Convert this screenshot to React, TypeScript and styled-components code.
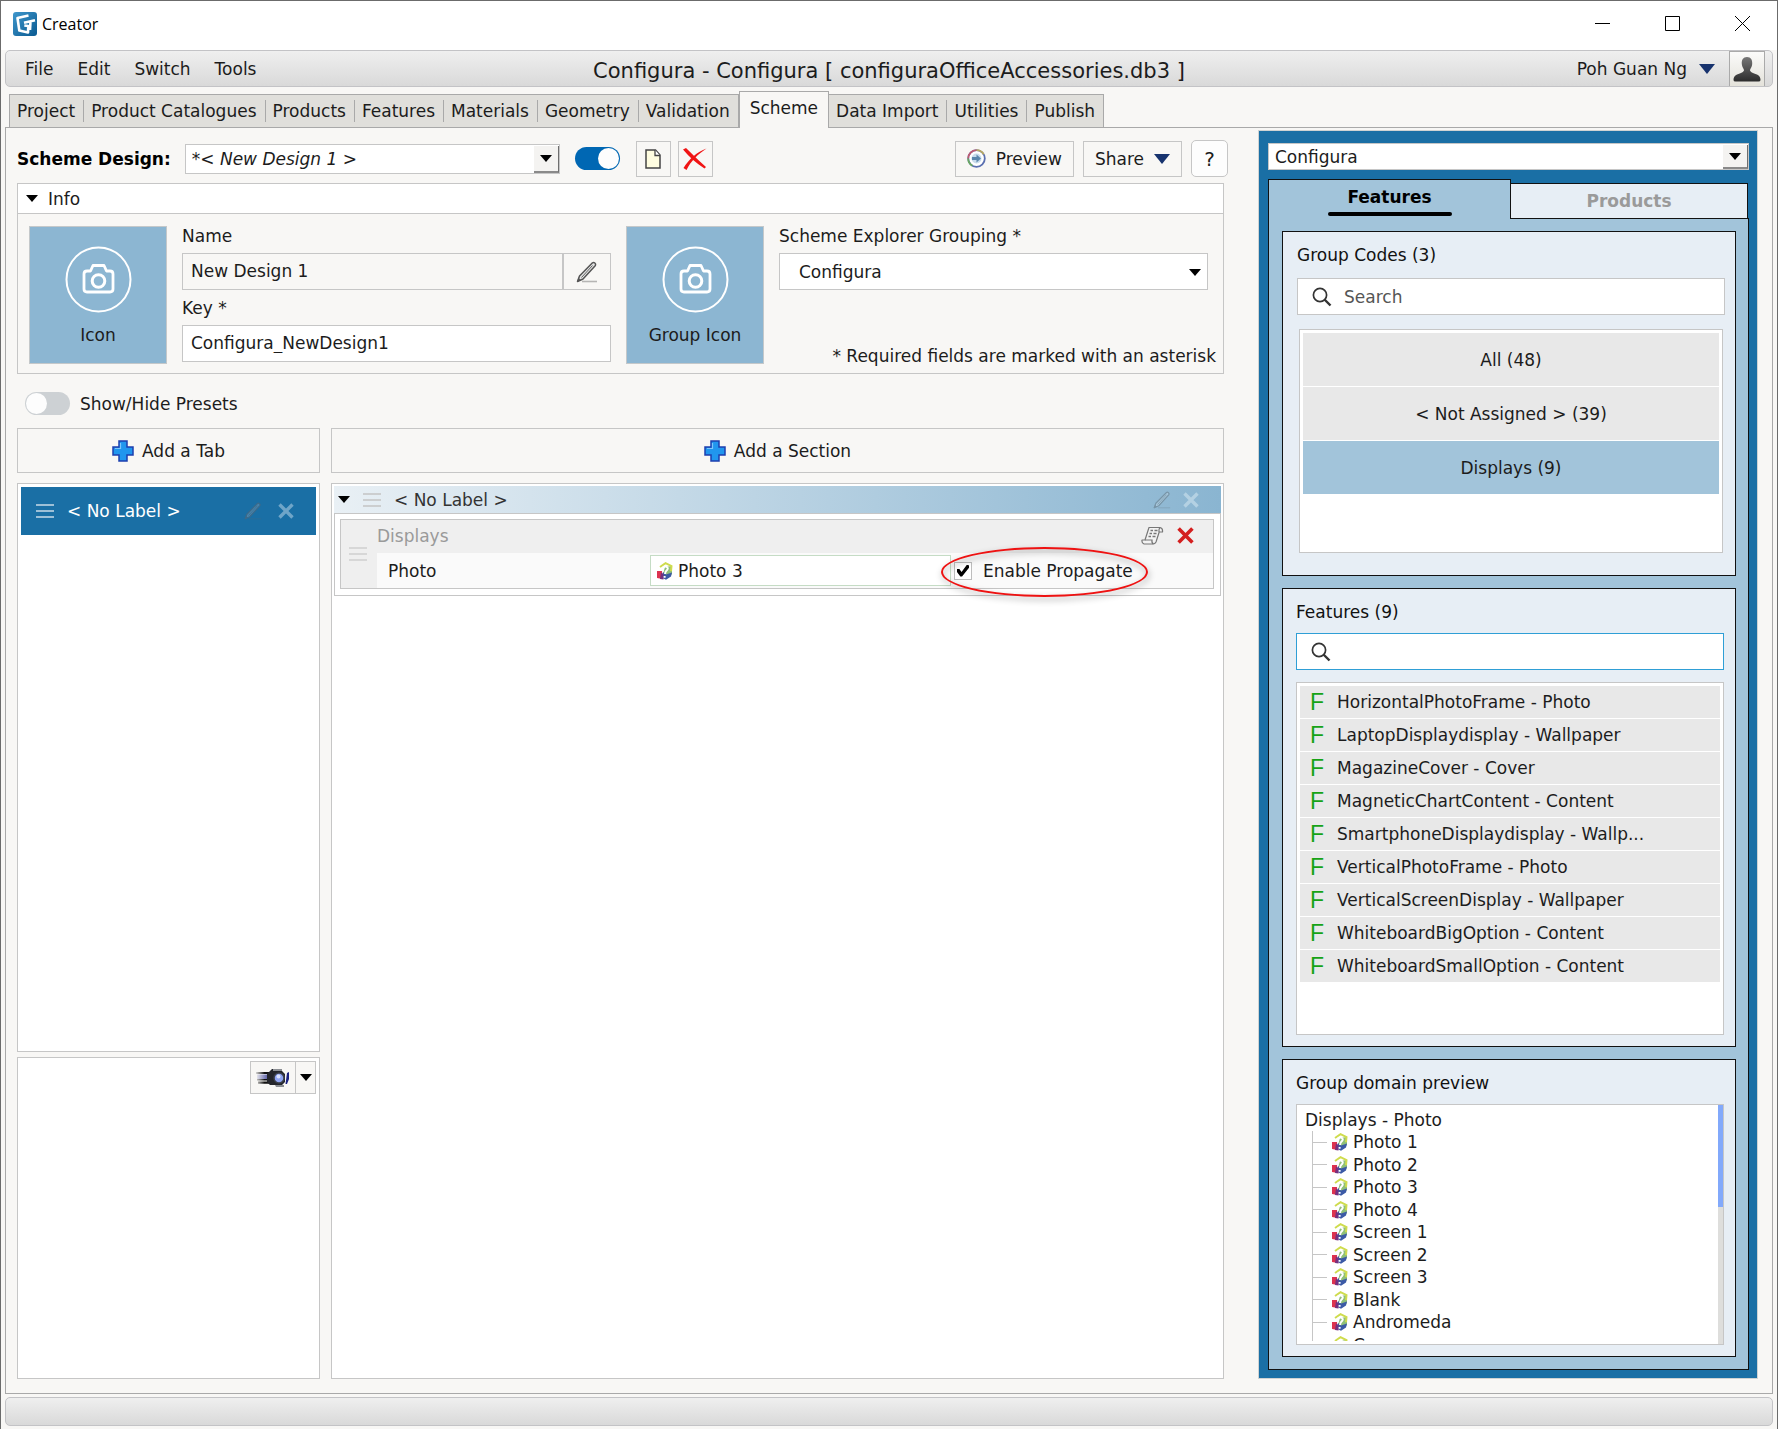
import React, { useState } from "react";
import styled, { createGlobalStyle, css } from "styled-components";

const line = "#c6c6c6";
const blue = "#1a6fa5";
const skyBlue = "#a2c4da";
const sans = `"DejaVu Sans", Verdana, sans-serif`;

const GlobalStyle = createGlobalStyle`
  *, *::before, *::after { box-sizing: border-box; }
  body { margin: 0; background: #f8f7f5; }
  button, input, select { font: inherit; color: inherit; margin: 0; }
  button { cursor: pointer; }
  ul { list-style: none; margin: 0; padding: 0; }
  svg { display: block; flex: none; }
`;

const Window = styled.div`
  display: flex;
  flex-direction: column;
  min-height: 100vh;
  border: 1px solid #6b6b6b;
  border-bottom: 0;
  background: #f8f7f5;
  color: #1c1c1c;
  font: 17px/20px ${sans};
`;

/* ---------- title bar ---------- */

const TitleBar = styled.header`
  display: flex;
  align-items: center;
  height: 49px;
  padding: 0 0 4px 12px;
  gap: 5px;
  background: #fff;
  color: #000;
  font: 16px/22px "Open Sans", "Noto Sans", sans-serif;
`;

const WindowButtons = styled.div`
  display: flex;
  margin-left: auto;
`;

const WindowButton = styled.button`
  display: grid;
  place-items: center;
  width: 70px;
  height: 44px;
  padding: 0;
  border: 0;
  background: none;
`;

/* ---------- menu bar ---------- */

const bar = css`
  border: 1px solid #c3c3c6;
  border-radius: 5px;
  background: linear-gradient(#efefef, #d9d9d9);
`;

const MenuBar = styled.nav`
  ${bar}
  display: grid;
  grid-template-columns: 1fr auto 1fr;
  align-items: center;
  height: 37px;
  margin: 0 4px;
`;

const Menus = styled.div`
  display: flex;
  padding-left: 7px;
`;

const MenuButton = styled.button`
  height: 35px;
  padding: 1px 12px 0;
  border: 0;
  background: none;
`;

const DocumentTitle = styled.h1`
  margin: 0;
  padding-top: 4px;
  font-size: 21px;
  line-height: 26px;
  font-weight: normal;
`;

const UserArea = styled.div`
  display: flex;
  justify-content: flex-end;
  align-items: center;
  gap: 14px;
  padding-right: 7px;
`;

const UserButton = styled.button`
  display: flex;
  align-items: center;
  gap: 12px;
  padding: 0;
  border: 0;
  background: none;
`;

const Avatar = styled.button`
  display: grid;
  place-items: end center;
  width: 36px;
  height: 35px;
  padding: 0 0 4px;
  border: 1px solid #aaa;
  border-bottom: 0;
  background: linear-gradient(#fbfbfa, #e4e2da);
`;

/* ---------- page tabs ---------- */

const PageTabs = styled.div`
  display: flex;
  align-items: flex-end;
  height: 36px;
  margin: 4px 8px 0;
`;

const TabGroup = styled.div`
  display: flex;
  align-items: center;
  height: 33px;
  border: 1px solid #a9a9a9;
  border-bottom: 0;
  background: #e0dfdb;
`;

const PageTab = styled.button`
  height: 32px;
  padding: 0 8px 0 7px;
  border: 0;
  background: none;
`;

const TabDivider = styled.span`
  width: 1px;
  height: 22px;
  background: #a9a9a9;
`;

const ActivePageTab = styled.button`
  z-index: 1;
  height: 37px;
  margin: 0 -1px -1px 0;
  padding: 0 10px 5px;
  border: 1px solid #a9a9a9;
  border-bottom: 0;
  background: #f8f7f5;
`;

/* ---------- page frame ---------- */

const Page = styled.main`
  flex: 1;
  display: flex;
  align-items: stretch;
  gap: 30px;
  margin: 0 4px;
  padding: 2px 14px 14px 11px;
  border: 1px solid #a9a9a9;
`;

const Editor = styled.section`
  flex: 1;
  min-width: 0;
  display: flex;
  flex-direction: column;
  padding-top: 10px;
`;

const EditorBody = styled.div`
  flex: 1;
  display: flex;
  flex-direction: column;
  margin: 6px 4px 0 0;
`;

const Toolbar = styled.div`
  display: flex;
  align-items: center;
  height: 37px;
`;

const DesignLabel = styled.label`
  margin-right: 14px;
  color: #000;
  font-weight: bold;
`;

const SelectBox = styled.div<{ $width?: number; $height: number }>`
  position: relative;
  width: ${(p) => (p.$width ? `${p.$width}px` : "100%")};
  height: ${(p) => p.$height}px;
`;

const Select = styled.select<{ $inset?: number; $italic?: boolean }>`
  appearance: none;
  display: block;
  width: 100%;
  height: 100%;
  padding: 0 32px 0 ${(p) => p.$inset ?? 6}px;
  border: 1px solid ${line};
  border-radius: 0;
  background: #fff;
  font-style: ${(p) => (p.$italic ? "italic" : "normal")};
`;

const SelectArrow = styled.span<{ $raised?: boolean }>`
  position: absolute;
  top: 2px;
  right: 1px;
  bottom: 1px;
  display: grid;
  place-items: center;
  width: 25px;
  pointer-events: none;
  ${(p) =>
    p.$raised &&
    css`
      background: #f4f3f1;
      border-right: 1px solid #6e6e6e;
      border-bottom: 2px solid #8a8a8a;
    `}
`;

const Switch = styled.input`
  appearance: none;
  flex: none;
  width: 45px;
  height: 23px;
  border-radius: 12px;
  background: #cdd1d4;
  cursor: pointer;

  &::before {
    content: "";
    display: block;
    width: 21px;
    height: 21px;
    margin: 1px;
    border-radius: 50%;
    background: #fdfdfd;
  }
  &:checked {
    background: #0067b3;
  }
  &:checked::before {
    margin-left: 23px;
  }
`;

const ToolButton = styled.button<{ $width?: number; $rounded?: boolean }>`
  display: flex;
  align-items: center;
  justify-content: center;
  gap: 10px;
  width: ${(p) => (p.$width ? `${p.$width}px` : "auto")};
  height: ${(p) => (p.$rounded ? 37 : 36)}px;
  padding: 0 ${(p) => (p.$width ? 0 : 11)}px;
  border: 1px solid ${line};
  border-radius: ${(p) => (p.$rounded ? 5 : 0)}px;
  background: ${(p) => (p.$rounded ? "#fdfdfd" : "#f8f7f5")};
  font-size: ${(p) => (p.$rounded ? 20 : 17)}px;
`;

const ToolGroup = styled.div<{ $gap: number; $push?: boolean }>`
  display: flex;
  align-items: center;
  gap: ${(p) => p.$gap}px;
  margin-left: ${(p) => (p.$push ? "auto" : "15px")};
`;

/* ---------- info ---------- */

const InfoPanel = styled.section`
  border: 1px solid ${line};
`;

const InfoHeader = styled.button`
  display: flex;
  align-items: center;
  gap: 10px;
  width: 100%;
  height: 30px;
  padding: 0 8px;
  border: 0;
  border-bottom: 1px solid ${line};
  background: #fff;
`;

const InfoGrid = styled.div`
  display: grid;
  grid-template-columns: 138px 1fr 138px 1fr;
  gap: 15px;
  padding: 12px 15px 9px 11px;
`;

const IconTile = styled.button`
  display: flex;
  flex-direction: column;
  align-items: center;
  justify-content: space-between;
  height: 138px;
  padding: 19px 0 18px;
  border: 1px solid #c4c8ca;
  background: #8cb6d2;
`;

const Fields = styled.div`
  display: flex;
  flex-direction: column;
  gap: 8px;
`;

const Field = styled.div`
  display: flex;
  flex-direction: column;
  gap: 7px;
`;

const FieldRow = styled.div`
  display: flex;
`;

const TextInput = styled.input`
  flex: 1;
  min-width: 0;
  height: 37px;
  padding: 0 8px 2px;
  border: 1px solid ${line};
  background: #fff;
  &:read-only {
    background: #f8f7f5;
  }
`;

const EditButton = styled.button`
  display: grid;
  place-items: center;
  width: 48px;
  height: 37px;
  padding: 0;
  border: 1px solid ${line};
  background: #f8f7f5;
`;

const RequiredNote = styled.p`
  margin: auto -8px 0 0;
  line-height: 16px;
  text-align: right;
  white-space: nowrap;
`;

/* ---------- workspace ---------- */

const PresetsRow = styled.label`
  display: flex;
  align-items: center;
  gap: 10px;
  margin: 18px 0 13px 8px;
`;

const Workspace = styled.div`
  flex: 1;
  display: grid;
  grid-template-columns: 303px 1fr;
  grid-template-rows: auto 1fr;
  gap: 10px 11px;
`;

const AddButton = styled.button`
  display: flex;
  align-items: center;
  justify-content: center;
  gap: 8px;
  height: 45px;
  padding: 1px 0 0;
  border: 1px solid ${line};
  background: #f8f7f5;
`;

const Column = styled.div`
  display: flex;
  flex-direction: column;
  gap: 5px;
`;

const Panel = styled.div<{ $height?: number }>`
  flex: ${(p) => (p.$height ? "none" : 1)};
  height: ${(p) => (p.$height ? `${p.$height}px` : "auto")};
  padding: 3px;
  border: 1px solid ${line};
  background: #fff;
`;

const TabItem = styled.div`
  display: flex;
  align-items: center;
  height: 48px;
  padding: 0 22px 0 15px;
  gap: 13px;
  background: ${blue};
  color: #fff;
`;

const RowActions = styled.span<{ $gap: number }>`
  display: flex;
  align-items: center;
  gap: ${(p) => p.$gap}px;
  margin-left: auto;
`;

const IconButton = styled.button`
  display: grid;
  place-items: center;
  padding: 0;
  border: 0;
  background: none;
`;

const CameraBar = styled.div`
  display: flex;
  justify-content: flex-end;
`;

const CameraButton = styled.button<{ $width: number }>`
  display: grid;
  place-items: center;
  width: ${(p) => p.$width}px;
  height: 33px;
  margin-left: -1px;
  padding: 0;
  border: 1px solid ${line};
  background: #f8f7f5;
`;

const SectionPanel = styled(Panel)`
  padding: 2px;
`;

const SectionHeader = styled.div`
  display: flex;
  align-items: center;
  height: 27px;
  padding: 0 22px 0 4px;
  gap: 13px;
  background: linear-gradient(90deg, #e9f0f5, #8ab5d1);
  color: #333;
`;

const SectionBody = styled.div`
  height: 83px;
  padding: 5px 6px 7px 5px;
  border: 1px solid ${line};
`;

const FeatureBox = styled.div`
  display: grid;
  grid-template-columns: 36px 1fr;
  align-items: center;
  height: 70px;
  border: 1px solid ${line};
  background: #efefef;
`;

const Handle = styled.span`
  padding-left: 8px;
`;

const FeatureHead = styled.div`
  display: flex;
  align-items: center;
  height: 33px;
  padding: 0 19px 2px 0;
  color: #9a9a9a;
`;

const FeatureLine = styled.div`
  display: flex;
  align-items: center;
  height: 35px;
  background: #fafafa;
`;

const FeatureName = styled.span`
  flex: 0 0 273px;
  padding-left: 11px;
`;

const DomainField = styled.button`
  display: flex;
  align-items: center;
  gap: 5px;
  flex: 0 1 301px;
  height: 31px;
  padding: 0 6px;
  border: 1px solid #c5dcc5;
  background: #fff;
`;

const PropagateLabel = styled.label`
  position: relative;
  display: flex;
  align-items: center;
  gap: 11px;
  margin-left: 3px;
`;

const CheckBox = styled.input`
  appearance: none;
  width: 18px;
  height: 18px;
  border: 1px solid #bdbdbd;
  background: #fff;

  &:checked::before {
    content: "";
    display: block;
    width: 12px;
    height: 12px;
    margin: 2px;
    background: #000;
    clip-path: polygon(0 38%, 20% 38%, 38% 62%, 84% 0, 100% 8%, 100% 28%, 42% 100%, 28% 100%, 0 62%);
  }
`;

const Callout = styled.span`
  position: absolute;
  inset: -14px -15px -16px -13px;
  border: 2px solid #ee1212;
  border-radius: 50%;
  filter: drop-shadow(1px 3px 3px rgba(0, 0, 0, 0.4));
  pointer-events: none;
`;

/* ---------- side panel ---------- */

const Side = styled.aside`
  flex: none;
  display: flex;
  flex-direction: column;
  width: 500px;
  padding: 12px 8px 8px 9px;
  border: 1px solid #cfd3d3;
  background: ${blue};
`;

const SideTabs = styled.div`
  display: grid;
  grid-template-columns: 243px 1fr;
  align-items: end;
  margin-top: 9px;
`;

const SideTab = styled.button<{ $active?: boolean }>`
  display: flex;
  flex-direction: column;
  align-items: center;
  border: 1px solid #111;
  padding: 0;
  font-weight: bold;
  ${(p) =>
    p.$active
      ? css`
          z-index: 1;
          height: 40px;
          margin-bottom: -1px;
          padding-top: 7px;
          border-bottom: 0;
          gap: 5px;
          background: ${skyBlue};
          color: #000;
        `
      : css`
          height: 36px;
          margin: 0 1px -1px -1px;
          justify-content: center;
          background: #e7eef5;
          color: #9a9a9a;
        `}
`;

const ActiveMark = styled.span`
  width: 124px;
  height: 4px;
  border-radius: 2px;
  background: #000;
`;

const SideBody = styled.div`
  flex: 1;
  display: flex;
  flex-direction: column;
  gap: 12px;
  padding: 12px 12px 12px 13px;
  border: 1px solid #111;
  background: ${skyBlue};
`;

const Card = styled.section<{ $roomy?: boolean; $grow?: boolean }>`
  display: flex;
  flex-direction: column;
  flex: ${(p) => (p.$grow ? 1 : "none")};
  gap: ${(p) => (p.$roomy ? 14 : 12)}px;
  padding: ${(p) => (p.$roomy ? "12px 10px 22px 14px" : "12px 11px 11px 13px")};
  border: 1px solid #111;
  background: #e7eef5;
`;

const CardTitle = styled.h2`
  margin: 0 0 -2px;
  font-size: 17px;
  line-height: 22px;
  font-weight: normal;
  color: #111;
`;

const SearchBox = styled.label<{ $active?: boolean }>`
  display: flex;
  align-items: center;
  gap: 12px;
  height: 37px;
  padding: 0 14px;
  border: 1px solid ${(p) => (p.$active ? "#2f9fd6" : line)};
  background: #fff;
`;

const SearchInput = styled.input`
  flex: 1;
  min-width: 0;
  padding: 0;
  border: 0;
  outline: 0;
  background: none;
  &::placeholder {
    color: #555;
    opacity: 1;
  }
`;

const List = styled.ul<{ $inset?: boolean; $minHeight?: number }>`
  flex: 1;
  display: flex;
  flex-direction: column;
  gap: 1px;
  margin: 0 ${(p) => (p.$inset ? 2 : 0)}px;
  padding: 3px;
  min-height: ${(p) => p.$minHeight ?? 0}px;
  border: 1px solid ${line};
  background: #fff;
`;

const GroupItem = styled.button<{ $active?: boolean }>`
  display: block;
  width: 100%;
  height: 53px;
  padding: 0;
  border: 0;
  background: ${(p) => (p.$active ? skyBlue : "#e8e8e8")};
`;

const FeatureItem = styled.button`
  display: grid;
  grid-template-columns: 27px 1fr;
  align-items: center;
  width: 100%;
  height: 32px;
  padding: 0 10px;
  border: 0;
  background: #e8e8e8;
  text-align: left;
`;

const FeatureMark = styled.span`
  color: #16a316;
  font-family: "Liberation Sans", Arial, sans-serif;
  font-size: 23px;
`;

const DomainBox = styled.div`
  display: flex;
  justify-content: space-between;
  height: 241px;
  border: 1px solid ${line};
  background: #fff;
`;

const DomainTree = styled.div`
  display: flex;
  flex-direction: column;
  padding: 4px 8px 3px;
  line-height: 22px;
`;

const TreeClip = styled.div`
  flex: 1;
  min-height: 0;
  margin-left: 7px;
  border-left: 1px solid ${line};
  overflow: hidden;
`;

const TreeRows = styled.ul`
  display: grid;
  grid-template-rows: repeat(10, 1fr);
  height: 225px;
`;

const TreeRow = styled.li`
  display: flex;
  align-items: center;
  gap: 5px;

  &::before {
    content: "";
    width: 14px;
    height: 1px;
    background: ${line};
  }
`;

const ScrollTrack = styled.div`
  width: 5px;
  background: #dededc;
`;

const ScrollThumb = styled.div`
  height: 102px;
  background: #82a9fb;
`;

const StatusBar = styled.footer`
  ${bar}
  height: 29px;
  margin: 3px 4px;
`;

/* ---------- icons ---------- */

const Logo = () => (
  <svg width="24" height="24" viewBox="0 0 24 24" aria-hidden="true">
    <defs>
      <linearGradient id="logo" x1="0" y1="0" x2="1" y2="1">
        <stop offset="0" stopColor="#3f97cc" />
        <stop offset="1" stopColor="#0a5a91" />
      </linearGradient>
    </defs>
    <rect width="24" height="24" rx="3" fill="url(#logo)" />
    <path d="M15.500 3.500 4.500 6l1.800 12.500 8.700 2 .3-6.500-4-.5" fill="none" stroke="#fff" strokeWidth="2.600" strokeLinejoin="round" />
    <path d="m11 10.800 11-2.600M17.500 9.500l-.5 8.500" fill="none" stroke="#fff" strokeWidth="2.600" />
  </svg>
);

const Triangle = ({ size = 12, color = "#000" }: { size?: number; color?: string }) => (
  <svg width={size} height={Math.round(size * 0.6)} viewBox="0 0 10 6" preserveAspectRatio="none" aria-hidden="true">
    <path d="M0 0h10L5 6z" fill={color} />
  </svg>
);

const Lines = ({ color = "#c4c4c4" }: { color?: string }) => (
  <svg width="18" height="14" viewBox="0 0 18 14" aria-hidden="true">
    <path d="M0 1h18M0 7h18M0 13h18" stroke={color} strokeWidth="1.500" />
  </svg>
);

const Pencil = ({ size = 22, color = "#555", fill = "#e4e4e4" }: { size?: number; color?: string; fill?: string }) => (
  <svg width={size} height={size} viewBox="0 0 22 22" aria-hidden="true">
    <path d="M6 20.500h15" stroke={color} strokeWidth="1.600" opacity=".4" />
    <path d="M1.500 20.500 3.500 15 16.500 1.800c1.500-1 3.800.8 2.900 2.600L7 18z" fill={fill} stroke={color} strokeWidth="1.500" strokeLinejoin="round" />
    <path d="m5.500 16.500 11-12M1.500 20.500l1.200-3 1.600 1.500z" fill={color} stroke={color} strokeWidth=".9" />
  </svg>
);

const Cross = ({ size = 16, color, width = 3.4 }: { size?: number; color: string; width?: number }) => (
  <svg width={size} height={size} viewBox="0 0 16 16" aria-hidden="true">
    <path d="m1.500 1.500 13 13M14.500 1.500l-13 13" stroke={color} strokeWidth={width} />
  </svg>
);

const DeleteMark = () => (
  <svg width="26" height="24" viewBox="0 0 26 24" aria-hidden="true">
    <path d="M1 2.500 4 1c5 5 12 12 20 19l-1.500 1.500C14 16 7 10 1 2.500z" fill="#f01414" />
    <path d="M24.500 1.500C16 7 9 14 4.500 23L1.500 21C7 12 15 5 24.500 1.500z" fill="#f01414" />
  </svg>
);

const NewPage = () => (
  <svg width="16" height="20" viewBox="0 0 16 20" aria-hidden="true">
    <path d="M1 1h9.500L15 6v13H1z" fill="#fffde0" stroke="#444" strokeWidth="1.500" />
    <path d="M10 1v5.500h5" fill="#fff" stroke="#444" strokeWidth="1.300" />
  </svg>
);

const PreviewMark = () => (
  <svg width="19" height="19" viewBox="0 0 19 19" aria-hidden="true">
    <circle cx="9.500" cy="9.500" r="8.300" fill="#fff" stroke="#5a6fb0" strokeWidth="1.800" />
    <path d="M1.200 9.500A8.300 8.300 0 0 1 9.500 1.200" fill="none" stroke="#c05a70" strokeWidth="1.800" />
    <path d="M9.500 1.200a8.300 8.300 0 0 1 7.200 4.200" fill="none" stroke="#b8a860" strokeWidth="1.800" />
    <path d="M1.200 9.500a8.300 8.300 0 0 0 4.200 7.200" fill="none" stroke="#6aa860" strokeWidth="1.800" />
    <circle cx="9.500" cy="9.500" r="5" fill="#c9dcec" />
    <path d="M5 8h4.500V5.500L14 9.500l-4.500 4V11H5z" fill="#5a86ac" />
  </svg>
);

const CameraMark = () => (
  <svg width="67" height="67" viewBox="0 0 67 67" fill="none" stroke="#fff" aria-hidden="true">
    <circle cx="33.500" cy="33.500" r="32" strokeWidth="2" />
    <path d="M22 25h3.500l2.500-5.500h11l2.500 5.500H45q3 0 3 3v15q0 3-3 3H22q-3 0-3-3V28q0-3 3-3z" strokeWidth="2.800" strokeLinejoin="round" />
    <circle cx="33.500" cy="35" r="6.300" strokeWidth="3" />
  </svg>
);

const Plus = () => (
  <svg width="22" height="22" viewBox="0 0 22 22" aria-hidden="true">
    <path d="M7 1h8v6h6v8h-6v6H7v-6H1V7h6z" fill="#2196ee" stroke="#1c3fae" strokeWidth="1.500" />
    <path d="M8.500 3v5.500H3" fill="none" stroke="#7cc6fb" strokeWidth="1.200" />
  </svg>
);

const Material = () => (
  <svg width="16" height="18" viewBox="0 0 16 18" aria-hidden="true">
    <path d="m8 5 7-1v8l-4 4-5-4z" fill="#8fbf78" />
    <path d="m6 10 3 2.500 6-2-1 4-5 3.300-4-2z" fill="#3c5aa6" />
    <path d="M0 9h5l.5 8L0 16z" fill="#dc3350" />
    <path d="m4 10.500 2.500 1.500v5.500L3 17z" fill="#75307f" />
    <path d="M3 5 8.500 1.200l6 3-.5 5" fill="none" stroke="#cfdc4e" strokeWidth="2" />
    <path d="M5.500 6q2-2 4-1.200 2.300 1.200.5 3.200-2 1.500-2 4M7.600 14v1.800" fill="none" stroke="#fff" strokeWidth="2" />
  </svg>
);

const Script = () => (
  <svg width="23" height="19" viewBox="0 0 23 19" fill="#f3f3f3" stroke="#777" strokeWidth="1.200" aria-hidden="true">
    <path d="M8 1.500h11q3 .5 2.500 4.500h-3.300L15 16q-1 2-3 2H3q-2.500-1-2-4h3z" strokeLinejoin="round" />
    <path d="M4 14h7q-.5 3 1.500 4M18 6q-.5-3 1-4.500" fill="none" />
    <path d="M9.500 4.500h2.500m1.500 0h3M8.500 7.500h2.500m1.500 0h3M7.500 10.500h2.500m1.500 0h3" fill="none" strokeWidth="1.600" />
  </svg>
);

const Search = () => (
  <svg width="20" height="20" viewBox="0 0 20 20" fill="none" stroke="#333" aria-hidden="true">
    <circle cx="8" cy="8" r="6.600" strokeWidth="1.700" />
    <path d="m12.500 12.500 6 6" strokeWidth="2.400" />
  </svg>
);

const Person = () => (
  <svg width="28" height="26" viewBox="0 0 28 26" aria-hidden="true">
    <defs>
      <linearGradient id="person" x1="0" y1="0" x2="0" y2="1">
        <stop offset="0" stopColor="#777" />
        <stop offset="1" stopColor="#2c2c2c" />
      </linearGradient>
    </defs>
    <path d="M14 1c4 0 5.500 3 5.200 7-.2 3-1.700 4.500-2.200 6 0 2 3 3 7 4.500 2.500 1 3.500 3 3.500 5.500q0 1.500-2 1.500h-23q-2 0-2-1.500C.5 21.500 1.500 19.500 4 18.500c4-1.500 7-2.500 7-4.500-.5-1.500-2-3-2.200-6C8.500 4 10 1 14 1z" fill="url(#person)" />
  </svg>
);

const Projector = () => (
  <svg width="34" height="20" viewBox="0 0 34 20" aria-hidden="true">
    <defs>
      <linearGradient id="speed">
        <stop offset="0" stopColor="#111" stopOpacity=".15" />
        <stop offset=".5" stopColor="#111" />
      </linearGradient>
      <linearGradient id="streak">
        <stop offset="0" stopColor="#232a8c" stopOpacity=".1" />
        <stop offset="1" stopColor="#232a8c" />
      </linearGradient>
    </defs>
    <path d="M0 4h16v2H0zM2 13.500h15v2.200H2zM1 11h13v1.600H1z" fill="url(#speed)" />
    <path d="M1 6.500h15V11H1z" fill="url(#streak)" />
    <path d="m14 3 2-2h10v2l3 3v8l-3 3H14l-3-3V6z" fill="#24262c" />
    <path d="M17 1h9v2h-9zM19 17h9v2h-8z" fill="#8a8d92" />
    <circle cx="23" cy="10" r="5" fill="#8fa4f4" stroke="#3b3f4a" strokeWidth="1.500" />
    <circle cx="22.500" cy="8.500" r="2" fill="#dbe3ff" />
    <path d="m31 5 2-1v7l-2 5h-1.500z" fill="#1b2282" />
  </svg>
);

/* ---------- data ---------- */

const tabsBefore = ["Project", "Product Catalogues", "Products", "Features", "Materials", "Geometry", "Validation"];
const tabsAfter = ["Data Import", "Utilities", "Publish"];
const groups = ["All (48)", "< Not Assigned > (39)", "Displays (9)"];
const features = [
  "HorizontalPhotoFrame - Photo",
  "LaptopDisplaydisplay - Wallpaper",
  "MagazineCover - Cover",
  "MagneticChartContent - Content",
  "SmartphoneDisplaydisplay - Wallp...",
  "VerticalPhotoFrame - Photo",
  "VerticalScreenDisplay - Wallpaper",
  "WhiteboardBigOption - Content",
  "WhiteboardSmallOption - Content",
];
const domain = ["Photo 1", "Photo 2", "Photo 3", "Photo 4", "Screen 1", "Screen 2", "Screen 3", "Blank", "Andromeda", "Cosmos"];

const TabStrip = ({ names }: { names: string[] }) => (
  <TabGroup>
    {names.map((name, i) => (
      <React.Fragment key={name}>
        {i > 0 && <TabDivider />}
        <PageTab role="tab" aria-selected={false}>{name}</PageTab>
      </React.Fragment>
    ))}
  </TabGroup>
);

export default function App() {
  const [group, setGroup] = useState(2);
  return (
    <>
      <GlobalStyle />
      <Window>
        <TitleBar>
          <Logo />
          <span>Creator</span>
          <WindowButtons>
            <WindowButton aria-label="Minimize">
              <svg width="15" height="15" viewBox="0 0 15 15"><path d="M0 7.500h15" stroke="#000" /></svg>
            </WindowButton>
            <WindowButton aria-label="Maximize">
              <svg width="15" height="15" viewBox="0 0 15 15"><path d="M.5.5h14v14H.5z" fill="none" stroke="#000" /></svg>
            </WindowButton>
            <WindowButton aria-label="Close">
              <svg width="15" height="15" viewBox="0 0 15 15"><path d="m0 0 15 15M15 0 0 15" stroke="#000" /></svg>
            </WindowButton>
          </WindowButtons>
        </TitleBar>

        <MenuBar>
          <Menus>
            {["File", "Edit", "Switch", "Tools"].map((m) => (
              <MenuButton key={m}>{m}</MenuButton>
            ))}
          </Menus>
          <DocumentTitle>Configura - Configura [ configuraOfficeAccessories.db3 ]</DocumentTitle>
          <UserArea>
            <UserButton>
              Poh Guan Ng
              <Triangle size={16} color="#17336e" />
            </UserButton>
            <Avatar aria-label="Account">
              <Person />
            </Avatar>
          </UserArea>
        </MenuBar>

        <PageTabs role="tablist">
          <TabStrip names={tabsBefore} />
          <ActivePageTab role="tab" aria-selected>Scheme</ActivePageTab>
          <TabStrip names={tabsAfter} />
        </PageTabs>

        <Page>
          <Editor>
            <Toolbar>
              <DesignLabel htmlFor="design">Scheme Design:</DesignLabel>
              <SelectBox $width={375} $height={30}>
                <Select id="design" $italic>
                  <option>*&lt; New Design 1 &gt;</option>
                </Select>
                <SelectArrow $raised>
                  <Triangle />
                </SelectArrow>
              </SelectBox>
              <ToolGroup $gap={16}>
                <Switch type="checkbox" role="switch" aria-label="Design enabled" defaultChecked />
                <ToolGroup as="span" $gap={7} $push>
                  <ToolButton $width={35} aria-label="New design"><NewPage /></ToolButton>
                  <ToolButton $width={35} aria-label="Delete design"><DeleteMark /></ToolButton>
                </ToolGroup>
              </ToolGroup>
              <ToolGroup $gap={9} $push>
                <ToolButton><PreviewMark />Preview</ToolButton>
                <ToolButton>Share<Triangle size={16} color="#17336e" /></ToolButton>
                <ToolButton $width={37} $rounded>?</ToolButton>
              </ToolGroup>
            </Toolbar>

            <EditorBody>
              <InfoPanel>
                <InfoHeader aria-expanded>
                  <Triangle />
                  Info
                </InfoHeader>
                <InfoGrid>
                  <IconTile><CameraMark />Icon</IconTile>
                  <Fields>
                    <Field>
                      <label htmlFor="name">Name</label>
                      <FieldRow>
                        <TextInput id="name" readOnly value="New Design 1" />
                        <EditButton aria-label="Edit name"><Pencil /></EditButton>
                      </FieldRow>
                    </Field>
                    <Field>
                      <label htmlFor="key">Key *</label>
                      <FieldRow>
                        <TextInput id="key" defaultValue="Configura_NewDesign1" />
                      </FieldRow>
                    </Field>
                  </Fields>
                  <IconTile><CameraMark />Group Icon</IconTile>
                  <Fields>
                    <Field>
                      <label htmlFor="grouping">Scheme Explorer Grouping *</label>
                      <SelectBox $height={37}>
                        <Select id="grouping" $inset={19}>
                          <option>Configura</option>
                        </Select>
                        <SelectArrow>
                          <Triangle />
                        </SelectArrow>
                      </SelectBox>
                    </Field>
                    <RequiredNote>* Required fields are marked with an asterisk</RequiredNote>
                  </Fields>
                </InfoGrid>
              </InfoPanel>

              <PresetsRow>
                <Switch type="checkbox" role="switch" />
                Show/Hide Presets
              </PresetsRow>

              <Workspace>
                <AddButton><Plus />Add a Tab</AddButton>
                <AddButton><Plus />Add a Section</AddButton>
                <Column>
                  <Panel>
                    <TabItem>
                      <Lines color="#c9dbe7" />
                      &lt; No Label &gt;
                      <RowActions $gap={16}>
                        <IconButton aria-label="Rename tab"><Pencil size={18} color="#3c6a8a" fill="#4a86ae" /></IconButton>
                        <IconButton aria-label="Remove tab"><Cross color="#6fa5c8" /></IconButton>
                      </RowActions>
                    </TabItem>
                  </Panel>
                  <Panel $height={322}>
                    <CameraBar>
                      <CameraButton $width={46} aria-label="Camera"><Projector /></CameraButton>
                      <CameraButton $width={21} aria-label="Camera options"><Triangle /></CameraButton>
                    </CameraBar>
                  </Panel>
                </Column>
                <SectionPanel>
                  <SectionHeader>
                    <IconButton aria-label="Collapse section"><Triangle /></IconButton>
                    <Lines />
                    &lt; No Label &gt;
                    <RowActions $gap={12}>
                      <IconButton aria-label="Rename section"><Pencil size={18} color="#7895a8" fill="#a8c8dc" /></IconButton>
                      <IconButton aria-label="Remove section"><Cross color="#b4d1e3" /></IconButton>
                    </RowActions>
                  </SectionHeader>
                  <SectionBody>
                    <FeatureBox>
                      <Handle><Lines color="#cfcfcf" /></Handle>
                      <div>
                        <FeatureHead>
                          Displays
                          <RowActions $gap={13}>
                            <IconButton aria-label="Edit script"><Script /></IconButton>
                            <IconButton aria-label="Remove feature"><Cross size={17} color="#d41f1f" /></IconButton>
                          </RowActions>
                        </FeatureHead>
                        <FeatureLine>
                          <FeatureName>Photo</FeatureName>
                          <DomainField><Material />Photo 3</DomainField>
                          <PropagateLabel>
                            <CheckBox type="checkbox" defaultChecked />
                            Enable Propagate
                            <Callout />
                          </PropagateLabel>
                        </FeatureLine>
                      </div>
                    </FeatureBox>
                  </SectionBody>
                </SectionPanel>
              </Workspace>
            </EditorBody>
          </Editor>

          <Side>
            <SelectBox $height={27}>
              <Select aria-label="Library">
                <option>Configura</option>
              </Select>
              <SelectArrow $raised>
                <Triangle />
              </SelectArrow>
            </SelectBox>
            <SideTabs role="tablist">
              <SideTab role="tab" aria-selected $active>
                Features
                <ActiveMark />
              </SideTab>
              <SideTab role="tab" aria-selected={false}>Products</SideTab>
            </SideTabs>
            <SideBody>
              <Card $roomy>
                <CardTitle>Group Codes (3)</CardTitle>
                <SearchBox>
                  <Search />
                  <SearchInput placeholder="Search" aria-label="Search group codes" />
                </SearchBox>
                <List $inset $minHeight={224}>
                  {groups.map((g, i) => (
                    <li key={g}>
                      <GroupItem $active={i === group} onClick={() => setGroup(i)}>{g}</GroupItem>
                    </li>
                  ))}
                </List>
              </Card>
              <Card $grow>
                <CardTitle>Features (9)</CardTitle>
                <SearchBox $active>
                  <Search />
                  <SearchInput aria-label="Search features" />
                </SearchBox>
                <List>
                  {features.map((f) => (
                    <li key={f}>
                      <FeatureItem><FeatureMark>F</FeatureMark>{f}</FeatureItem>
                    </li>
                  ))}
                </List>
              </Card>
              <Card>
                <CardTitle>Group domain preview</CardTitle>
                <DomainBox>
                  <DomainTree>
                    Displays - Photo
                    <TreeClip>
                      <TreeRows>
                        {domain.map((d) => (
                          <TreeRow key={d}><Material />{d}</TreeRow>
                        ))}
                      </TreeRows>
                    </TreeClip>
                  </DomainTree>
                  <ScrollTrack>
                    <ScrollThumb />
                  </ScrollTrack>
                </DomainBox>
              </Card>
            </SideBody>
          </Side>
        </Page>

        <StatusBar />
      </Window>
    </>
  );
}
